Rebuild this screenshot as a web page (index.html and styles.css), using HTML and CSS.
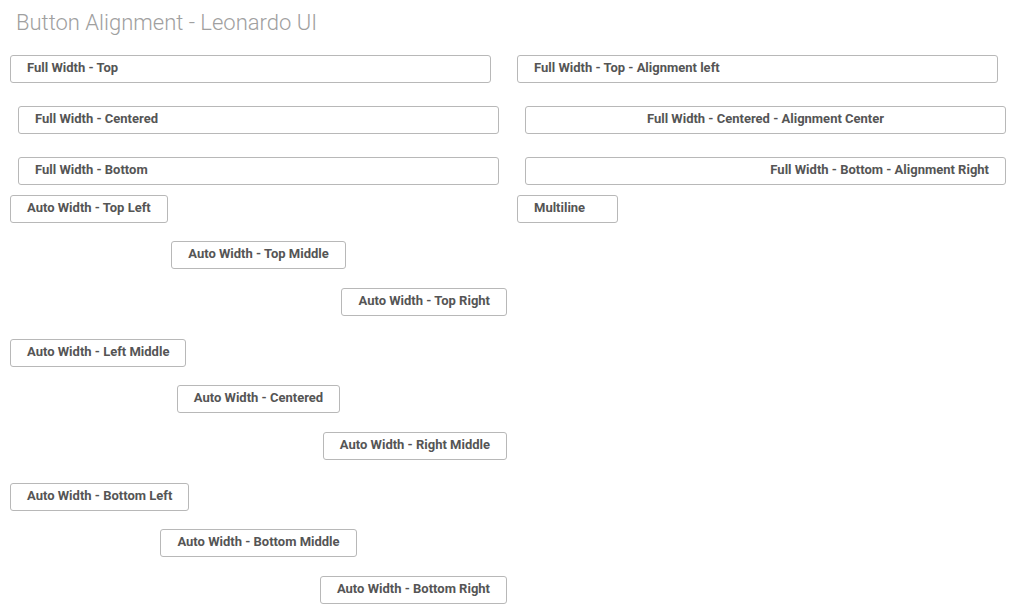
FILE: index.html
```html
<!DOCTYPE html>
<html>
<head>
<meta charset="utf-8">
<link rel="stylesheet" href="styles.css">
</head>
<body>
<h1 class="title">Button Alignment - Leonardo UI</h1>
<div class="grid">
  <div class="cell start"><button class="btn full">Full Width - Top</button></div>
  <div class="cell start"><button class="btn full">Full Width - Top - Alignment left</button></div>

  <div class="cell center"><button class="btn full">Full Width - Centered</button></div>
  <div class="cell center"><button class="btn full text-center">Full Width - Centered - Alignment Center</button></div>

  <div class="cell center"><button class="btn full">Full Width - Bottom</button></div>
  <div class="cell center"><button class="btn full text-right">Full Width - Bottom - Alignment Right</button></div>

  <div class="cell start"><button class="btn">Auto Width - Top Left</button></div>
  <div class="cell start"><button class="btn multi">Multiline</button></div>

  <div class="cell center"><button class="btn">Auto Width - Top Middle</button></div>
  <div class="cell"></div>

  <div class="cell end"><button class="btn">Auto Width - Top Right</button></div>
  <div class="cell"></div>

  <div class="cell start"><button class="btn">Auto Width - Left Middle</button></div>
  <div class="cell"></div>

  <div class="cell center"><button class="btn">Auto Width - Centered</button></div>
  <div class="cell"></div>

  <div class="cell end"><button class="btn">Auto Width - Right Middle</button></div>
  <div class="cell"></div>

  <div class="cell start"><button class="btn">Auto Width - Bottom Left</button></div>
  <div class="cell"></div>

  <div class="cell center"><button class="btn">Auto Width - Bottom Middle</button></div>
  <div class="cell"></div>

  <div class="cell end"><button class="btn">Auto Width - Bottom Right</button></div>
  <div class="cell"></div>
</div>
</body>
</html>
```

FILE: styles.css
```css
html, body {
  margin: 0;
  padding: 0;
  background: #ffffff;
}

body {
  font-family: "Roboto", "Liberation Sans", sans-serif;
  padding: 0 0 0 10px;
}

.title {
  margin: 0;
  padding: 9px 0 0 6px;
  height: 46px;
  box-sizing: border-box;
  font-family: "Roboto", sans-serif;
  font-weight: 300;
  font-size: 22px;
  line-height: 28px;
  color: #a0a0a0;
}

.grid {
  margin-top: 9px;
  display: grid;
  grid-template-columns: 497px 497px;
  column-gap: 10px;
  grid-template-rows: 51px 51px 38px 46px 47px 51px 46px 47px 51px 46px 47px 30px;
}

.cell {
  display: flex;
  align-items: flex-start;
}

.cell.start { justify-content: flex-start; }
.cell.center { justify-content: center; }
.cell.end { justify-content: flex-end; }

.btn {
  height: 28px;
  box-sizing: border-box;
  padding: 0 16px 2px;
  border: 1px solid #b8b8b8;
  border-radius: 3px;
  background: #ffffff;
  font-family: "Roboto", sans-serif;
  font-weight: 700;
  font-size: 13px;
  color: #555555;
  text-align: left;
  white-space: nowrap;
  line-height: 24px;
}

.btn.full { width: 481px; }
.btn.multi { width: 101px; }
.text-center { text-align: center; }
.text-right { text-align: right; }
```
